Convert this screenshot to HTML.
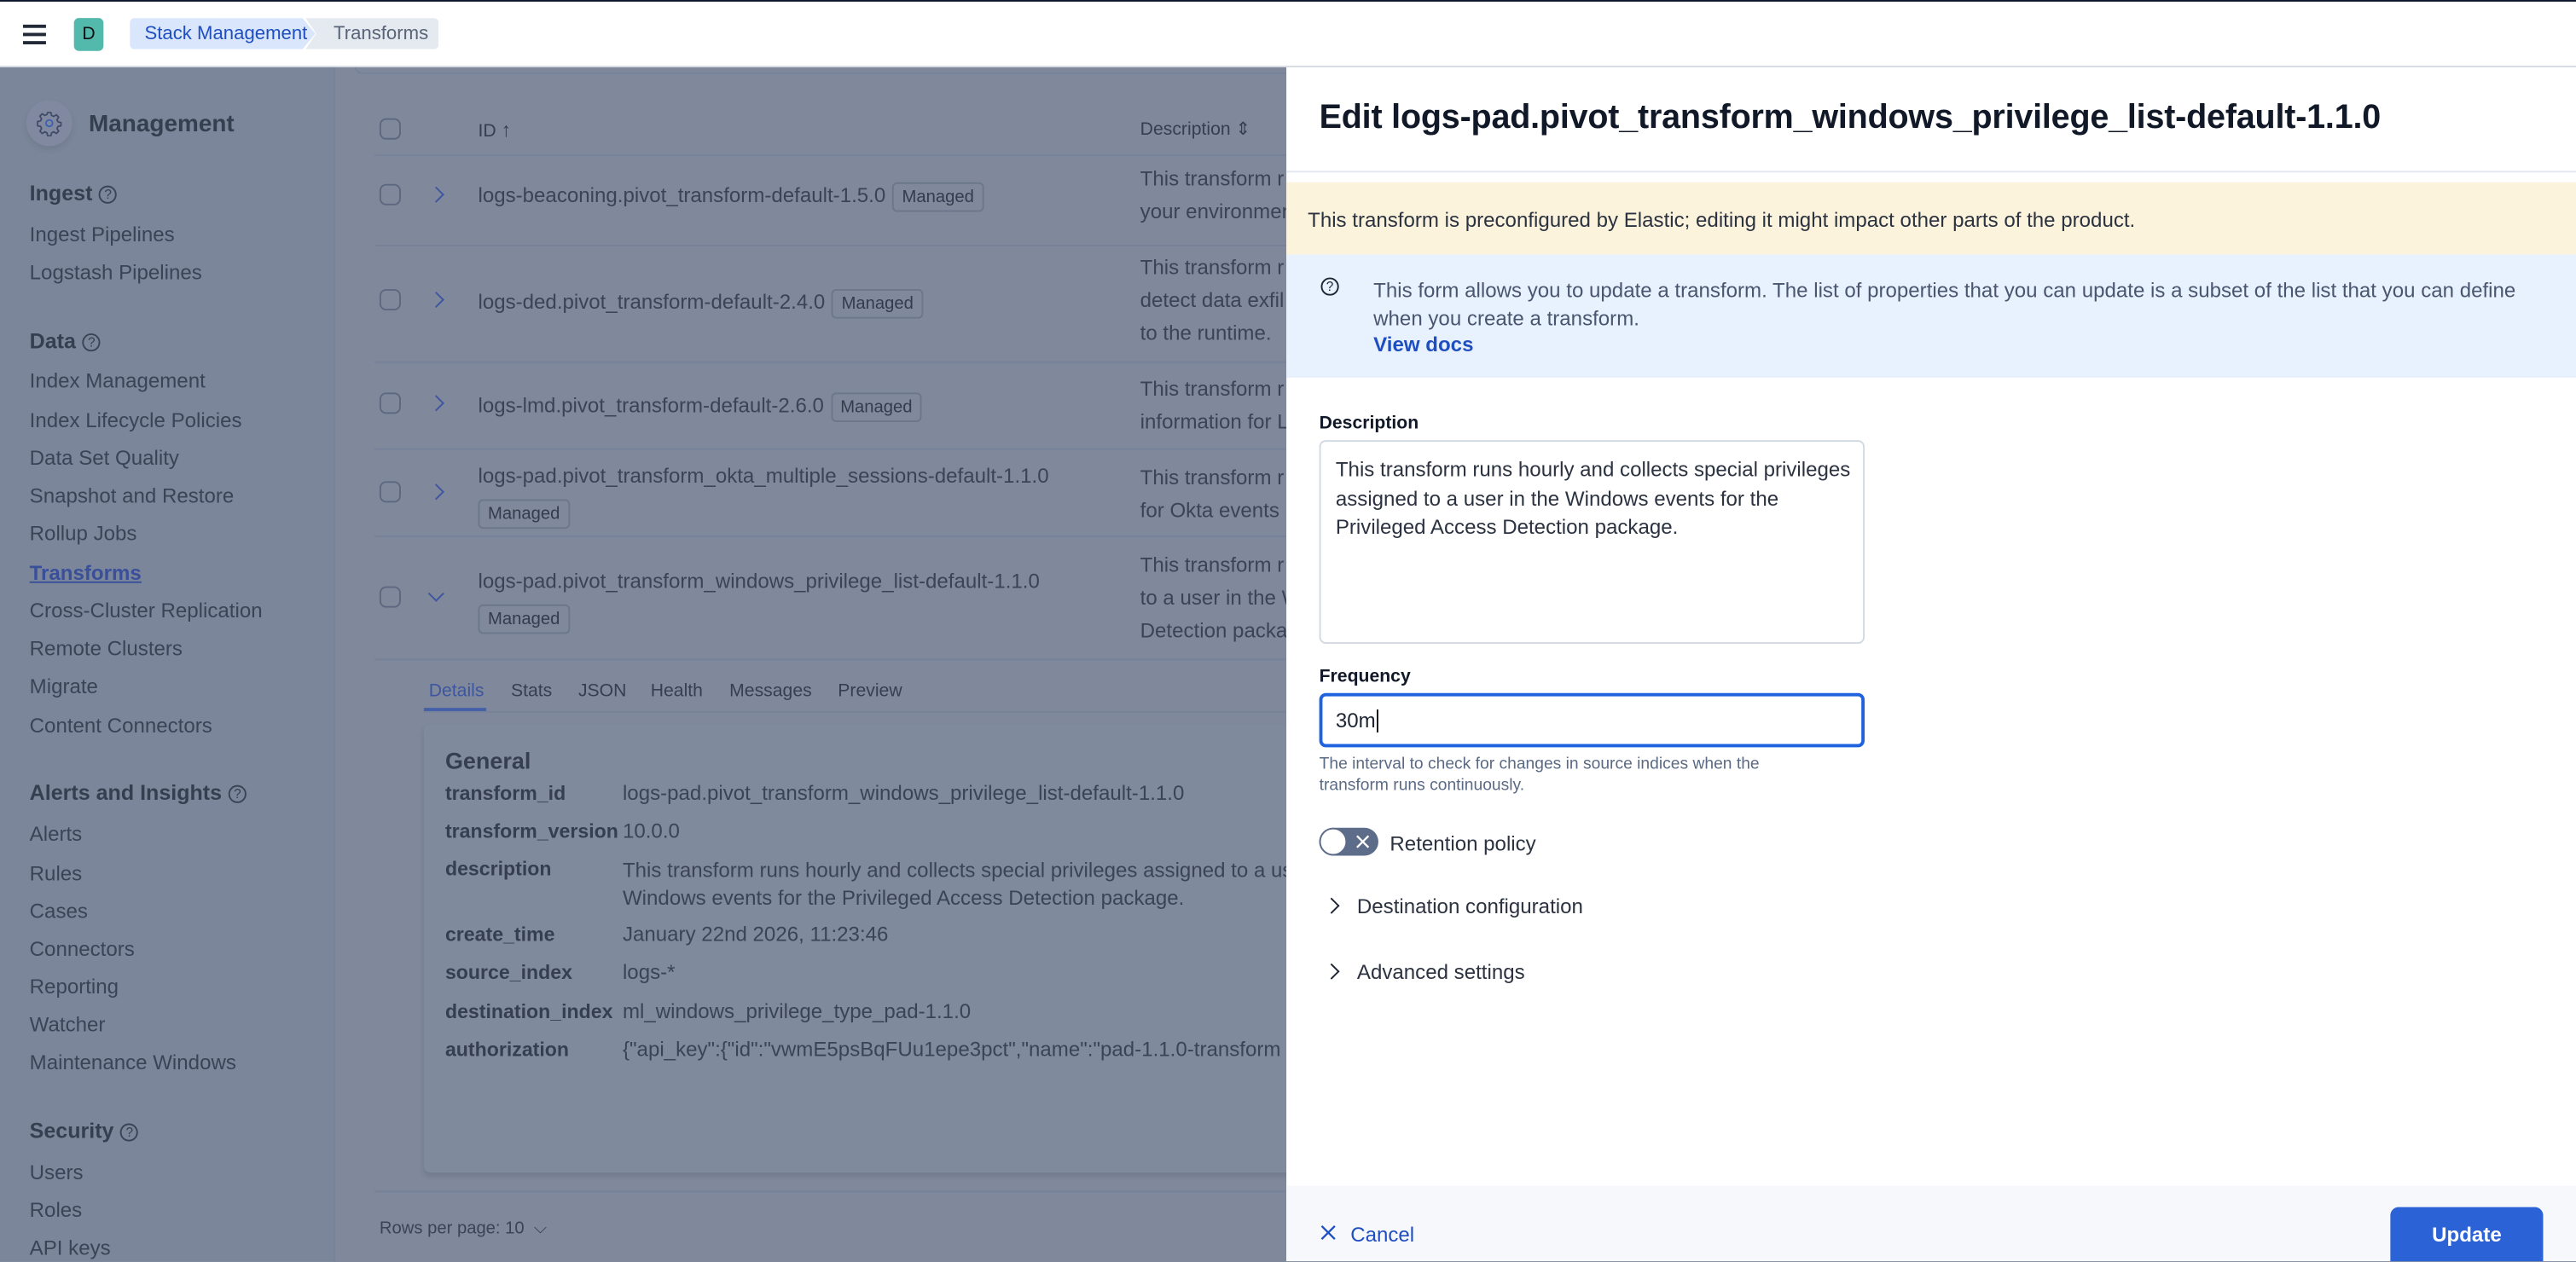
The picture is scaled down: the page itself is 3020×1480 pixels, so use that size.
<!DOCTYPE html>
<html><head><meta charset="utf-8"><style>
*{margin:0;padding:0;box-sizing:border-box}
html,body{width:3020px;height:1480px;overflow:hidden;background:#7f899b}
#w{position:absolute;left:0;top:0;width:1568px;height:768px;transform:scale(1.92602);transform-origin:0 0;font-family:"Liberation Sans",sans-serif;color:#343c4c;overflow:hidden}
.a{position:absolute;white-space:nowrap}
.sb{position:absolute;left:0;top:41px;width:204px;height:727px;background:#7b869a;border-right:1px solid #78839a}
.sb .a{left:18px;font-size:12.5px;line-height:16px;color:#3b4456;margin-top:1px}
.sb .h{font-weight:bold;font-size:13px;color:#363f50}
.q{display:inline-block;width:11px;height:11px;border:1px solid #3b4456;border-radius:50%;font-size:8px;line-height:9px;text-align:center;margin-left:4px;vertical-align:1px;font-weight:normal}
.cb{position:absolute;left:231px;width:13px;height:13px;border:1px solid #5d6880;border-radius:4px}
.chev{position:absolute;left:262px;width:7px;height:7px;border-right:1.2px solid #3e55a0;border-top:1.2px solid #3e55a0;transform:rotate(45deg)}
.id{font-size:12.5px;color:#3b4456;line-height:16px;margin-top:1px}
.badge{display:inline-block;border:1px solid #6c778c;border-radius:3px;font-size:10.5px;padding:1px 5px;line-height:14px;color:#343c4c;margin-left:4px}
.ln{position:absolute;left:228px;width:560px;height:1px;background:#76819a}
.ds{font-size:12.5px;color:#3b4456;line-height:20px;left:694px;margin-top:1px}
.k{left:271px;font-weight:bold;font-size:12px;color:#363f50;margin-top:1px}
.v{left:379px;font-size:12.5px;color:#3b4456;margin-top:1px}
.fly{position:absolute;left:783px;top:41px;width:785px;height:727px;background:#fff}
.fly .a{font-size:12.5px}
</style></head><body><div id="w">
<div class="a" style="left:0;top:0;width:1568px;height:41px;background:#fff;border-top:1px solid #0b1628;border-bottom:1px solid #d7dce4"></div>
<div class="a" style="left:14px;top:15px;width:14px;height:2px;background:#222a37;box-shadow:0 5px 0 #222a37,0 10px 0 #222a37"></div>
<div class="a" style="left:45px;top:11px;width:18px;height:20px;background:#54b9ad;border-radius:3px;font-size:11px;line-height:20px;text-align:center;color:#111">D</div>
<div class="a" style="left:79px;top:11px;width:113px;height:19px;background:#d9e6fc;border-radius:3px 0 0 3px;clip-path:polygon(0 0,93% 0,100% 50%,93% 100%,0 100%)"></div>
<div class="a" style="left:88px;top:14px;font-size:11.5px;color:#1f4ec0;line-height:15px">Stack Management</div>
<div class="a" style="left:186px;top:11px;width:81px;height:19px;background:#e5e9f0;border-radius:0 3px 3px 0;clip-path:polygon(0 0,100% 0,100% 100%,0 100%,8% 50%)"></div>
<div class="a" style="left:203px;top:14px;font-size:11.5px;color:#596478;line-height:15px">Transforms</div>

<div class="sb">
<div class="a" style="left:16px;top:19px;width:28px;height:28px;border-radius:50%;background:#8089a0;box-shadow:0 2px 4px rgba(0,0,0,.08)"></div>
<svg class="a" style="left:22px;top:25px" width="16" height="16" viewBox="0 0 16 16" fill="none" stroke="#3e4a66" stroke-width="0.9"><circle cx="8" cy="8" r="2" stroke="#3a5fb0"/><path d="M7 1.5h2l.4 1.8 1.3.6 1.6-1 1.4 1.4-1 1.6.6 1.3 1.8.4v2l-1.8.4-.6 1.3 1 1.6-1.4 1.4-1.6-1-1.3.6-.4 1.8H7l-.4-1.8-1.3-.6-1.6 1-1.4-1.4 1-1.6-.6-1.3-1.8-.4V7l1.8-.4.6-1.3-1-1.6 1.4-1.4 1.6 1 1.3-.6z"/></svg>
<div class="a" style="left:54px;top:25px;font-size:14.5px;font-weight:bold;color:#363f50;line-height:18px">Management</div>
<div class="a h" style="top:68px">Ingest<span class="q">?</span></div>
<div class="a" style="top:93px">Ingest Pipelines</div>
<div class="a" style="top:116px">Logstash Pipelines</div>
<div class="a h" style="top:158px">Data<span class="q">?</span></div>
<div class="a" style="top:182px">Index Management</div>
<div class="a" style="top:206px">Index Lifecycle Policies</div>
<div class="a" style="top:229px">Data Set Quality</div>
<div class="a" style="top:252px">Snapshot and Restore</div>
<div class="a" style="top:275px">Rollup Jobs</div>
<div class="a" style="top:299px;color:#3a4f9a;text-decoration:underline;font-weight:bold">Transforms</div>
<div class="a" style="top:322px">Cross-Cluster Replication</div>
<div class="a" style="top:345px">Remote Clusters</div>
<div class="a" style="top:368px">Migrate</div>
<div class="a" style="top:392px">Content Connectors</div>
<div class="a h" style="top:433px">Alerts and Insights<span class="q">?</span></div>
<div class="a" style="top:458px">Alerts</div>
<div class="a" style="top:482px">Rules</div>
<div class="a" style="top:505px">Cases</div>
<div class="a" style="top:528px">Connectors</div>
<div class="a" style="top:551px">Reporting</div>
<div class="a" style="top:574px">Watcher</div>
<div class="a" style="top:597px">Maintenance Windows</div>
<div class="a h" style="top:639px">Security<span class="q">?</span></div>
<div class="a" style="top:664px">Users</div>
<div class="a" style="top:687px">Roles</div>
<div class="a" style="top:710px">API keys</div>
</div>

<div class="a" style="left:216px;top:41px;width:580px;height:4px;border:1px solid #76819a;border-top:0;border-radius:0 0 4px 4px"></div>
<div class="cb" style="top:72px"></div>
<div class="a" style="left:291px;top:72px;font-size:11px;color:#363f50;line-height:14px">ID <span style="font-size:12px">↑</span></div>
<div class="a" style="left:694px;top:72px;font-size:11px;color:#363f50;line-height:14px">Description ⇕</div>
<div class="ln" style="top:94px"></div>
<div class="cb" style="top:112px"></div><div class="chev" style="top:115px"></div>
<div class="a id" style="left:291px;top:110px">logs-beaconing.pivot_transform-default-1.5.0<span class="badge">Managed</span></div>
<div class="a ds" style="top:98px">This transform r<br>your environmen</div>
<div class="ln" style="top:149px"></div>
<div class="cb" style="top:176px"></div><div class="chev" style="top:179px"></div>
<div class="a id" style="left:291px;top:175px">logs-ded.pivot_transform-default-2.4.0<span class="badge">Managed</span></div>
<div class="a ds" style="top:152px">This transform r<br>detect data exfil<br>to the runtime.</div>
<div class="ln" style="top:220px"></div>
<div class="cb" style="top:239px"></div><div class="chev" style="top:242px"></div>
<div class="a id" style="left:291px;top:238px">logs-lmd.pivot_transform-default-2.6.0<span class="badge">Managed</span></div>
<div class="a ds" style="top:226px">This transform r<br>information for L</div>
<div class="ln" style="top:273px"></div>
<div class="cb" style="top:293px"></div><div class="chev" style="top:296px"></div>
<div class="a id" style="left:291px;top:281px">logs-pad.pivot_transform_okta_multiple_sessions-default-1.1.0</div>
<div class="a" style="left:287px;top:303px"><span class="badge">Managed</span></div>
<div class="a ds" style="top:280px">This transform r<br>for Okta events</div>
<div class="ln" style="top:326px"></div>
<div class="cb" style="top:357px"></div><div class="chev" style="top:358px;transform:rotate(135deg)"></div>
<div class="a id" style="left:291px;top:345px">logs-pad.pivot_transform_windows_privilege_list-default-1.1.0</div>
<div class="a" style="left:287px;top:367px"><span class="badge">Managed</span></div>
<div class="a ds" style="top:333px">This transform r<br>to a user in the W<br>Detection packa</div>
<div class="ln" style="top:401px"></div>
<div class="a" style="left:261px;top:414px;font-size:11px;color:#3e55a0;line-height:14px">Details</div>
<div class="a" style="left:311px;top:414px;font-size:11px;color:#363f50;line-height:14px">Stats</div>
<div class="a" style="left:352px;top:414px;font-size:11px;color:#363f50;line-height:14px">JSON</div>
<div class="a" style="left:396px;top:414px;font-size:11px;color:#363f50;line-height:14px">Health</div>
<div class="a" style="left:444px;top:414px;font-size:11px;color:#363f50;line-height:14px">Messages</div>
<div class="a" style="left:510px;top:414px;font-size:11px;color:#363f50;line-height:14px">Preview</div>
<div class="a" style="left:258px;top:433px;width:530px;height:1px;background:#78839a"></div>
<div class="a" style="left:258px;top:431px;width:38px;height:2px;background:#4560a8"></div>
<div class="a" style="left:258px;top:441px;width:530px;height:273px;background:#808a9d;border-radius:4px;box-shadow:0 2px 3px rgba(40,50,70,.15)"></div>
<div class="a" style="left:271px;top:455px;font-size:14px;font-weight:bold;color:#363f50">General</div>
<div class="a k" style="top:475px">transform_id</div><div class="a v" style="top:475px">logs-pad.pivot_transform_windows_privilege_list-default-1.1.0</div>
<div class="a k" style="top:498px">transform_version</div><div class="a v" style="top:498px">10.0.0</div>
<div class="a k" style="top:521px">description</div><div class="a v" style="top:521px;line-height:17px">This transform runs hourly and collects special privileges assigned to a us<br>Windows events for the Privileged Access Detection package.</div>
<div class="a k" style="top:561px">create_time</div><div class="a v" style="top:561px">January 22nd 2026, 11:23:46</div>
<div class="a k" style="top:584px">source_index</div><div class="a v" style="top:584px">logs-*</div>
<div class="a k" style="top:608px">destination_index</div><div class="a v" style="top:608px">ml_windows_privilege_type_pad-1.1.0</div>
<div class="a k" style="top:631px">authorization</div><div class="a v" style="top:631px">{"api_key":{"id":"vwmE5psBqFUu1epe3pct","name":"pad-1.1.0-transform</div>
<div class="ln" style="top:725px"></div>
<div class="a" style="left:231px;top:742px;font-size:10.5px;color:#3b4456">Rows per page: 10 &nbsp;⌵</div>

<div class="fly">
<div class="a" style="left:20px;top:18px;font-size:20.5px;font-weight:bold;color:#111827;line-height:26px;letter-spacing:-0.1px">Edit logs-pad.pivot_transform_windows_privilege_list-default-1.1.0</div>
<div class="a" style="left:0;top:63px;width:785px;height:1px;background:#e3e8f0"></div>
<div class="a" style="left:0;top:70px;width:785px;height:44px;background:#fcf3dc"></div>
<div class="a" style="left:13px;top:85px;color:#2b3240;line-height:16px">This transform is preconfigured by Elastic; editing it might impact other parts of the product.</div>
<div class="a" style="left:0;top:114px;width:785px;height:75px;background:#e8f1fe"></div>
<div class="a" style="left:21px;top:128px;width:11px;height:11px;border:1px solid #1d2433;border-radius:50%;font-size:8px;line-height:9px;text-align:center;color:#1d2433">?</div>
<div class="a" style="left:53px;top:128px;color:#4a5670;line-height:17px">This form allows you to update a transform. The list of properties that you can update is a subset of the list that you can define<br>when you create a transform.</div>
<div class="a" style="left:53px;top:161px;color:#1f4ec0;font-weight:bold;line-height:17px">View docs</div>
<div class="a" style="left:20px;top:211px;font-size:11px;font-weight:bold;color:#111827">Description</div>
<div class="a" style="left:20px;top:227px;width:332px;height:124px;border:1px solid #d3d9e3;border-radius:4px;background:#fff"></div>
<div class="a" style="left:30px;top:237px;color:#2b3240;line-height:17.5px">This transform runs hourly and collects special privileges<br>assigned to a user in the Windows events for the<br>Privileged Access Detection package.</div>
<div class="a" style="left:20px;top:365px;font-size:11px;font-weight:bold;color:#111827">Frequency</div>
<div class="a" style="left:20px;top:381px;width:332px;height:33px;border:2px solid #1f62e0;border-radius:4px;background:#fff"></div>
<div class="a" style="left:30px;top:390px;color:#1d2433;line-height:16px">30m<span style="border-left:1px solid #111;margin-left:1px"></span></div>
<div class="a" style="left:20px;top:419px;font-size:10px;color:#5a6a85;line-height:12.5px">The interval to check for changes in source indices when the<br>transform runs continuously.</div>
<div class="a" style="left:20px;top:463px;width:36px;height:17px;border-radius:9px;background:#5d6c88"></div>
<div class="a" style="left:20px;top:463px;width:17px;height:17px;border-radius:50%;background:#fff;border:1px solid #5d6c88"></div>
<svg class="a" style="left:41px;top:466px" width="11" height="11" viewBox="0 0 11 11" stroke="#fff" stroke-width="1.2"><path d="M2 2l7 7M9 2l-7 7"/></svg>
<div class="a" style="left:63px;top:465px;color:#2b3240;line-height:16px">Retention policy</div>
<div class="a" style="left:24px;top:507px;width:7px;height:7px;border-right:1.2px solid #1d2433;border-top:1.2px solid #1d2433;transform:rotate(45deg)"></div>
<div class="a" style="left:43px;top:503px;color:#2b3240;line-height:16px">Destination configuration</div>
<div class="a" style="left:24px;top:547px;width:7px;height:7px;border-right:1.2px solid #1d2433;border-top:1.2px solid #1d2433;transform:rotate(45deg)"></div>
<div class="a" style="left:43px;top:543px;color:#2b3240;line-height:16px">Advanced settings</div>
<div class="a" style="left:0;top:681px;width:785px;height:46px;background:#f7f8fc"></div>
<svg class="a" style="left:20px;top:704px" width="11" height="11" viewBox="0 0 11 11" stroke="#1f4ec0" stroke-width="1.2"><path d="M1.5 1.5l8 8M9.5 1.5l-8 8"/></svg>
<div class="a" style="left:39px;top:703px;color:#1f4ec0;line-height:16px">Cancel</div>
<div class="a" style="left:672px;top:694px;width:93px;height:40px;background:#2b63d6;border-radius:5px"></div>
<div class="a" style="left:672px;top:703px;width:93px;text-align:center;color:#fff;font-weight:bold;line-height:16px">Update</div>
</div>
</div></body></html>
